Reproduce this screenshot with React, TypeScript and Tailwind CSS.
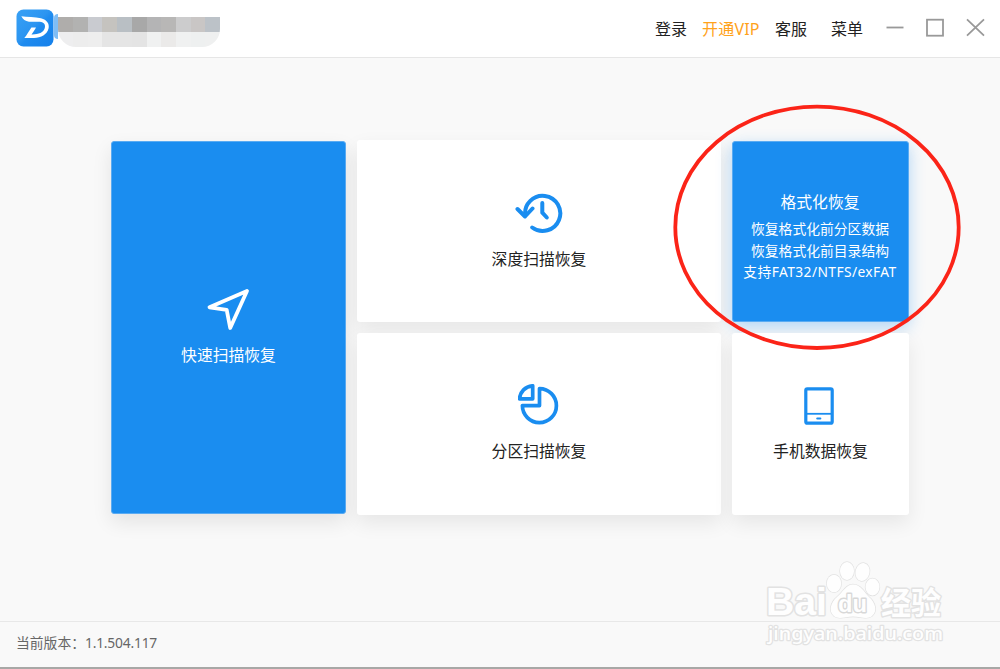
import React from "react";

const Logo: React.FC = () => (
    <svg className="size-[38px]" viewBox="0 0 38 38" fill="none">
        <defs>
            <linearGradient id="logo" x1="0" y1="0" x2="1" y2="1">
                <stop offset="0" stopColor="#38a1f5" />
                <stop offset="0.45" stopColor="#2c95f1" />
                <stop offset="0.55" stopColor="#1e8bef" />
                <stop offset="1" stopColor="#1580ea" />
            </linearGradient>
        </defs>
        <rect x="0.5" y="0.5" width="37" height="37" rx="7" fill="url(#logo)" />
        <path
            d="M5.3 7.3 C11 8.4 19 7.7 25 9.2 C31 10.8 33.6 14.6 32.6 19.3 C31.2 25.6 25 28.9 18 29 L8.3 29 C10.7 26.5 13.4 21.5 15.4 18.6 L20 18.6 C18.8 20.8 17.2 23.8 15.5 25.4 C22 25.6 27.5 23.7 28.8 19 C29.9 14.7 27 12.8 22 12.8 L13 12.7 C9.3 12.4 6.8 10.3 5.3 7.3 Z"
            fill="white"
        />
    </svg>
);

const SendIcon: React.FC = () => (
    <svg className="h-[44px] w-[44px]" viewBox="0 0 44 44" fill="none">
        <path
            d="M40 3 L2.5 19.3 L19.7 21.9 L23.2 40 Z"
            stroke="white"
            strokeWidth="3.8"
            strokeLinejoin="round"
        />
    </svg>
);

const HistoryIcon: React.FC = () => (
    <svg
        className="h-[42px] w-[48px]"
        viewBox="0 0 48 42"
        fill="none"
        stroke="#1a8df0"
        strokeWidth="4"
        strokeLinecap="round"
        strokeLinejoin="round"
    >
        <path d="M10.2 23.5 A17.6 17.6 0 1 1 17.2 35.5" />
        <path d="M2.5 17 L10 24.5 L17.5 16.5" />
        <path d="M27.3 11 V20.7 L31.8 25.5" />
    </svg>
);

const PieIcon: React.FC = () => (
    <svg
        className="h-[42px] w-[42px]"
        viewBox="1.3 1.2 42 42"
        fill="none"
        stroke="#1a8df0"
        strokeWidth="3.7"
        strokeLinejoin="round"
    >
        <path d="M16 3 V16 H2.8 C3.4 9 8.5 3.5 16 3 Z" />
        <path d="M22.8 5.8 V22.8 H5.7 A17 17 0 1 0 22.8 5.8 Z" />
    </svg>
);

const TabletIcon: React.FC = () => (
    <svg
        className="mr-[3px] h-[38px] w-[30px]"
        viewBox="0 0 30 38"
        fill="none"
        stroke="#1a8df0"
    >
        <rect
            x="1.8"
            y="1.8"
            width="26.4"
            height="34.4"
            rx="1.5"
            strokeWidth="3.2"
        />
        <path d="M3 26.8 H27" strokeWidth="1.8" />
        <path d="M13.3 31.5 H16.3" strokeWidth="2.2" strokeLinecap="round" />
    </svg>
);

const Card: React.FC<{
    name: string;
    icon: React.ReactNode;
    className: string;
}> = ({ name, icon, className }) => {
    return (
        <div
            className={`flex flex-col items-center rounded-[3px] text-[15.8px] leading-6 ${className}`}
        >
            {icon}
            <span className="whitespace-nowrap">{name}</span>
        </div>
    );
};

const pixels = [
    ["bg-[#afadab]", "bg-[#eeeeef]", "w-[15px]"],
    ["bg-[#b2b2b1]", "bg-[#ededed]", "w-[15px]"],
    ["bg-[#c9cbd0]", "bg-[#eeeeee]", "w-[14px]"],
    ["bg-[#c5c3bf]", "bg-[#e5e5e5]", "w-[15px]"],
    ["bg-[#b9bfc4]", "bg-[#e5e5e5]", "w-[15px]"],
    ["bg-[#a8a8a8]", "bg-[#e4e4e4]", "w-[15px]"],
    ["bg-[#b4b4b5]", "bg-[#f0f1f1]", "w-[14px]"],
    ["bg-[#b8b7b6]", "bg-[#ebeae9]", "w-[15px]"],
    ["bg-[#cccccd]", "bg-[#f0f1f1]", "w-[15px]"],
    ["bg-[#c9c6c5]", "bg-[#eef0f0]", "w-[14px]"],
    ["bg-[#bcc2c8]", "bg-[#eff0f0]", "w-[15px]"],
];

const Header: React.FC = () => (
    <header className="flex h-[58px] shrink-0 items-start border-b border-[#e6e6e6] bg-white pl-4">
        <div className="mt-[8.5px] flex">
            <Logo />
            <div className="mt-[5px] h-[25px] w-1 rounded-l-full bg-[#7fbdf5]" />
            <div className="mt-[8.5px] flex h-[30px] overflow-hidden rounded-b-[18px]">
                {pixels.map(([top, bottom, width], i) => (
                    <div key={i} className={width}>
                        <div className={`h-[15px] ${top}`} />
                        <div className={`h-[15px] ${bottom}`} />
                    </div>
                ))}
            </div>
        </div>

        <nav className="mt-[17px] mr-[23px] ml-auto flex text-[16px] leading-6 whitespace-nowrap text-[#222]">
            <span className="w-[47px]">登录</span>
            <span className="w-[73px] tracking-[0.2px] text-[#ffa21a]">
                开通VIP
            </span>
            <span className="w-14">客服</span>
            <span>菜单</span>
        </nav>

        <svg
            className="mt-[17px] mr-[14px] h-5 w-[100px]"
            viewBox="0 0 100 20"
            fill="none"
            stroke="#999"
            strokeWidth="1.8"
        >
            <path d="M0.5 10.5 H17.5" />
            <rect x="41" y="2.7" width="16" height="16" />
            <path d="M81 2.3 L98 18.7 M98 2.3 L81 18.7" />
        </svg>
    </header>
);

const Watermark: React.FC = () => (
    <svg
        className="absolute top-[556px] left-[760px] h-[96px] w-[190px]"
        viewBox="0 0 190 96"
        fill="#fefefe"
        stroke="#e2e2e2"
        strokeWidth="1.4"
        strokeLinejoin="round"
        paintOrder="stroke"
    >
        <text
            x="6"
            y="58.5"
            className="font-['Liberation_Sans',sans-serif] font-bold"
            fontSize="38"
            textLength="61"
            lengthAdjust="spacingAndGlyphs"
            strokeWidth="3"
        >
            Bai
        </text>
        <ellipse cx="74" cy="27.5" rx="7.2" ry="8.8" />
        <ellipse cx="87" cy="15" rx="7" ry="9" />
        <ellipse cx="102.5" cy="16" rx="7" ry="9" transform="rotate(12 102.5 16)" />
        <ellipse cx="112.5" cy="31" rx="7" ry="8.5" />
        <path d="M93 28.5 C101 28.5 104 36 109 41 C115 46 118 55 112 60 C107 64 101 60.5 93 60.5 C85 60.5 79 64 74 60 C68 55 71 46 77 41 C83 36 86 28.5 93 28.5 Z" />
        <text
            x="78"
            y="56"
            className="font-['Liberation_Sans',sans-serif] font-bold"
            fontSize="24"
            textLength="29"
            lengthAdjust="spacingAndGlyphs"
            strokeWidth="2.8"
            stroke="#d8d8d8"
        >
            du
        </text>
        <text
            x="121"
            y="58"
            className="font-['Noto_Sans_CJK_SC',sans-serif] font-bold"
            fontSize="31"
            textLength="60"
            lengthAdjust="spacingAndGlyphs"
            strokeWidth="2.8"
        >
            经验
        </text>
        <text
            x="8"
            y="84"
            className="font-['Noto_Sans',sans-serif] font-medium"
            fontSize="18.5"
            textLength="175"
            lengthAdjust="spacingAndGlyphs"
            strokeWidth="2.4"
        >
            jingyan.baidu.com
        </text>
    </svg>
);

const App: React.FC = () => {
    return (
        <div className="relative flex h-[669px] w-[1000px] flex-col overflow-hidden bg-[#f9f9f9] font-['Noto_Sans','Noto_Sans_CJK_SC',sans-serif] text-[#222]">
            <Header />

            <main className="flex flex-1 items-start gap-[11px] pt-[82px] pl-[111px]">
                <Card
                    name="快速扫描恢复"
                    icon={<SendIcon />}
                    className="mt-px h-[372.5px] w-[235px] gap-[11px] border border-[#5aabf2] bg-[#1a8df0] pt-[146px] text-white shadow-[0_8px_20px_rgba(0,0,0,0.09)]"
                />

                <div className="flex w-[364px] flex-col gap-[11px]">
                    <Card
                        name="深度扫描恢复"
                        icon={<HistoryIcon />}
                        className="h-[182px] gap-[13px] bg-white pt-[52px] shadow-[0_8px_20px_rgba(0,0,0,0.08)]"
                    />
                    <Card
                        name="分区扫描恢复"
                        icon={<PieIcon />}
                        className="h-[182px] gap-[13px] bg-white pt-[51px] shadow-[0_8px_20px_rgba(0,0,0,0.08)]"
                    />
                </div>

                <div className="flex w-[177px] flex-col gap-[11px]">
                    <div className="mt-px flex h-[181px] flex-col items-center rounded-[3px] border border-[#5aabf2] bg-[#1a8df0] pt-[48px] pr-px text-[13.8px] leading-[21.5px] whitespace-nowrap text-white shadow-[0_5px_16px_rgba(26,141,240,0.33)]">
                        <h2 className="mb-[4px] text-[15.8px] leading-6">
                            格式化恢复
                        </h2>
                        <p>恢复格式化前分区数据</p>
                        <p>恢复格式化前目录结构</p>
                        <p className="tracking-[0.4px]">支持FAT32/NTFS/exFAT</p>
                    </div>
                    <Card
                        name="手机数据恢复"
                        icon={<TabletIcon />}
                        className="relative h-[182px] gap-[14px] bg-white pt-[54px] shadow-[0_8px_20px_rgba(0,0,0,0.08)]"
                    />
                </div>
            </main>

            <footer className="flex h-[48px] shrink-0 items-center border-t border-b-2 border-t-[#e8e8e8] border-b-[#a8a8a6] pb-0.5 pl-4 text-[13.8px] text-[#666]">
                当前版本：
                <span className="tracking-[-0.2px]">1.1.504.117</span>
            </footer>

            <svg
                className="absolute top-[100px] left-[668px] h-[256px] w-[300px]"
                viewBox="0 0 300 256"
                fill="none"
            >
                <ellipse
                    cx="149"
                    cy="127.3"
                    rx="141.7"
                    ry="120.7"
                    stroke="#fb2418"
                    strokeWidth="3.8"
                />
            </svg>

            <Watermark />
        </div>
    );
};

export default App;
